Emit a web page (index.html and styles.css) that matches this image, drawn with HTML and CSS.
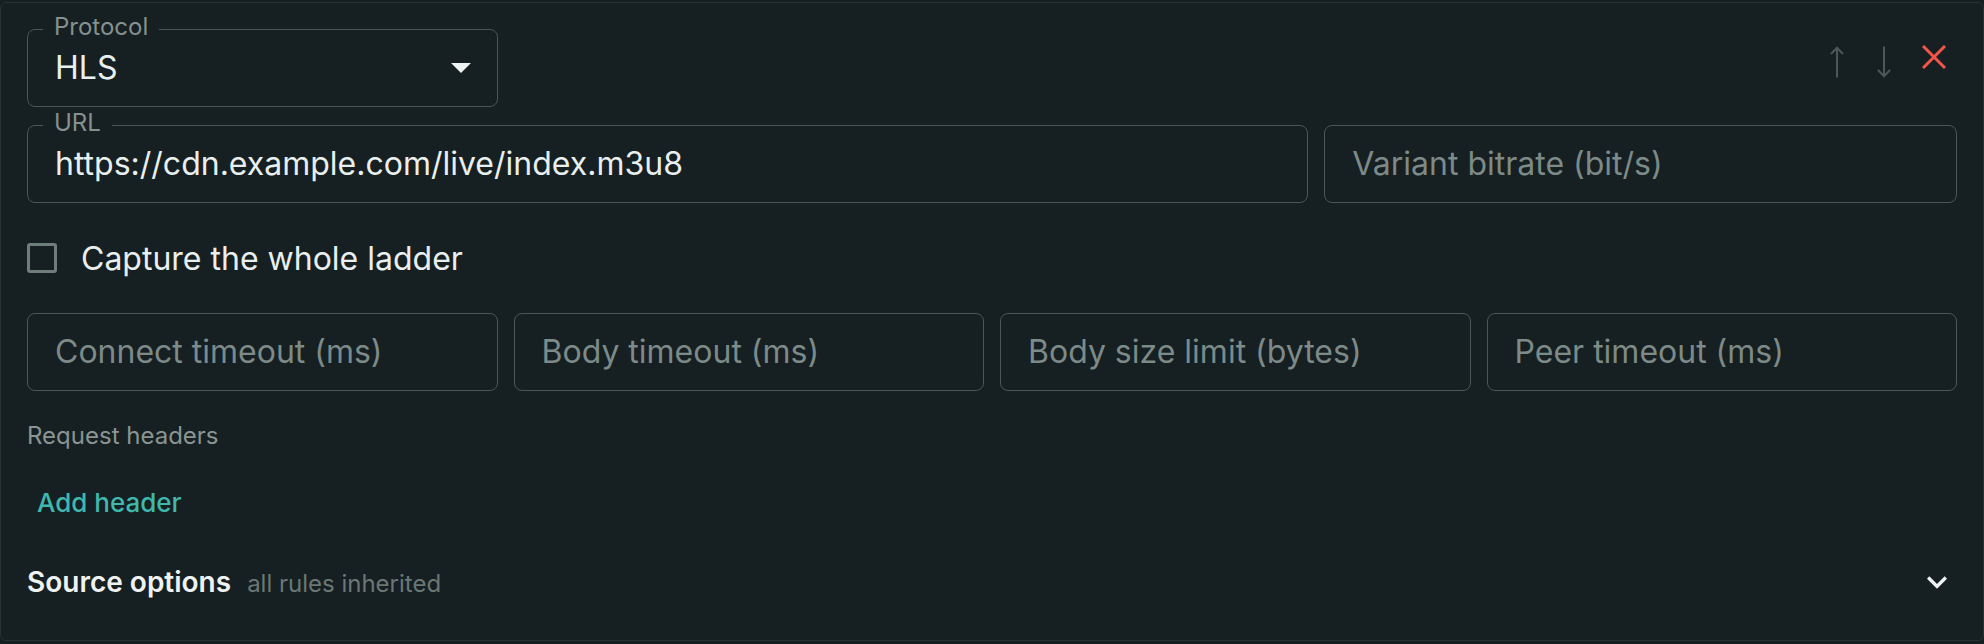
FILE: index.html
```html
<!DOCTYPE html>
<html lang="en">
<head>
<meta charset="utf-8">
<title>Source</title>
<link rel="stylesheet" href="styles.css">
</head>
<body>
<div class="card">
  <div class="top-row">
    <div class="field field-select">
      <span class="field-label">Protocol</span>
      <span class="field-value">HLS</span>
      <svg class="caret" width="20" height="10" viewBox="0 0 20 10"><path d="M0 0 L20 0 L10 10 Z" fill="#eef2f1"/></svg>
    </div>
    <div class="actions">
      <svg class="icon-arrow up" width="14" height="32" viewBox="0 0 14 32"><path d="M7 1.5 V31.5 M1 8 L7 1.8 L13 8" fill="none" stroke="#4c5857" stroke-width="2"/></svg>
      <svg class="icon-arrow down" width="14" height="32" viewBox="0 0 14 32"><path d="M7 0.5 V30.5 M1 24 L7 30.2 L13 24" fill="none" stroke="#4c5857" stroke-width="2"/></svg>
      <svg class="icon-close" width="24" height="24" viewBox="0 0 24 24"><path d="M1 1 L23 23 M23 1 L1 23" fill="none" stroke="#f2564a" stroke-width="3"/></svg>
    </div>
  </div>

  <div class="grid-12 url-row">
    <div class="field span-8">
      <span class="field-label">URL</span>
      <span class="field-value">https://cdn.example.com/live/index.m3u8</span>
    </div>
    <div class="field span-4">
      <span class="placeholder">Variant bitrate (bit/s)</span>
    </div>
  </div>

  <div class="check-row">
    <span class="checkbox"></span>
    <span class="check-label">Capture the whole ladder</span>
  </div>

  <div class="grid-4 timeout-row">
    <div class="field"><span class="placeholder">Connect timeout (ms)</span></div>
    <div class="field"><span class="placeholder">Body timeout (ms)</span></div>
    <div class="field"><span class="placeholder">Body size limit (bytes)</span></div>
    <div class="field"><span class="placeholder">Peer timeout (ms)</span></div>
  </div>

  <div class="section-label">Request headers</div>

  <div class="btn-row"><button class="text-btn">Add header</button></div>

  <div class="options-row">
    <span class="options-text">
      <span class="options-title">Source options</span>
      <span class="options-sub">all rules inherited</span>
    </span>
    <svg class="chevron" width="40" height="40" viewBox="0 0 24 24"><path d="M16.59 8.59 12 13.17 7.41 8.59 6 10l6 6 6-6z" fill="#f1f4f4"/></svg>
  </div>
</div>
</body>
</html>
```

FILE: styles.css
```css
* { box-sizing: border-box; }

html, body {
  margin: 0;
  background: #151e20;
}

body {
  padding-top: 2px;
  font-family: Inter, "Noto Sans", sans-serif;
  color: #e8eeed;
}

.card {
  border: 1px solid #263131;
  border-radius: 6px;
  background: #161f21;
  padding: 26px 26px 38px 26px;
}

.top-row {
  display: flex;
}

.field {
  position: relative;
  height: 78px;
  border: 1px solid #4b5655;
  border-radius: 8px;
  display: flex;
  align-items: center;
  padding: 0 26px 2px 27px;
  font-size: 32px;
  min-width: 0;
}

.field-select {
  width: calc((100% - 48px) / 4);
}

.field-label {
  position: absolute;
  top: -15px;
  left: 15px;
  padding: 0 11px;
  font-size: 24px;
  line-height: 24px;
  color: #85918f;
  background: #161f21;
}

.field-value {
  color: #e9efee;
  white-space: nowrap;
}

.placeholder {
  color: #7c8a88;
  white-space: nowrap;
}

.caret {
  margin-left: auto;
  margin-top: 2px;
  display: block;
}

.actions {
  margin-left: auto;
  margin-top: 16px;
  margin-right: 11px;
  align-self: flex-start;
  display: flex;
  align-items: flex-start;
}

.actions svg { display: block; }

.icon-arrow.up { margin-top: 1px; }
.icon-arrow.down { margin-top: 1px; margin-left: 33px; }
.icon-close { margin-left: 31px; }

.grid-12 {
  display: grid;
  grid-template-columns: repeat(12, minmax(0, 1fr));
  column-gap: 16px;
}

.span-8 { grid-column: span 8; }
.span-4 { grid-column: span 4; }

.url-row { margin-top: 18px; }

.check-row {
  margin-top: 40px;
  height: 30px;
  display: flex;
  align-items: center;
}

.checkbox {
  width: 30px;
  height: 30px;
  border: 3px solid #6f7d7a;
  border-radius: 3px;
  flex: none;
}

.check-label {
  margin-left: 24px;
  font-size: 32px;
  line-height: 30px;
  padding-top: 1px;
  color: #e9efee;
}

.grid-4 {
  display: grid;
  grid-template-columns: repeat(4, minmax(0, 1fr));
  column-gap: 16px;
}

.timeout-row { margin-top: 40px; }

.section-label {
  margin-top: 27px;
  font-size: 24px;
  line-height: 36px;
  color: #8a9593;
}

.btn-row {
  margin-top: 18px;
  display: flex;
}

.text-btn {
  font-family: Inter, "Noto Sans", sans-serif;
  font-size: 26px;
  font-weight: 500;
  line-height: 45px;
  padding: 8px 10px;
  border: 0;
  background: transparent;
  color: #3fb8ad;
  cursor: pointer;
}

.options-row {
  margin-top: 29px;
  height: 40px;
  display: flex;
  align-items: center;
}

.options-text {
  display: flex;
  align-items: baseline;
}

.options-title {
  font-size: 28px;
  font-weight: 600;
  color: #eef2f2;
}

.options-sub {
  margin-left: 16px;
  font-size: 24px;
  color: #6a7775;
}

.chevron {
  margin-left: auto;
  display: block;
}
```
